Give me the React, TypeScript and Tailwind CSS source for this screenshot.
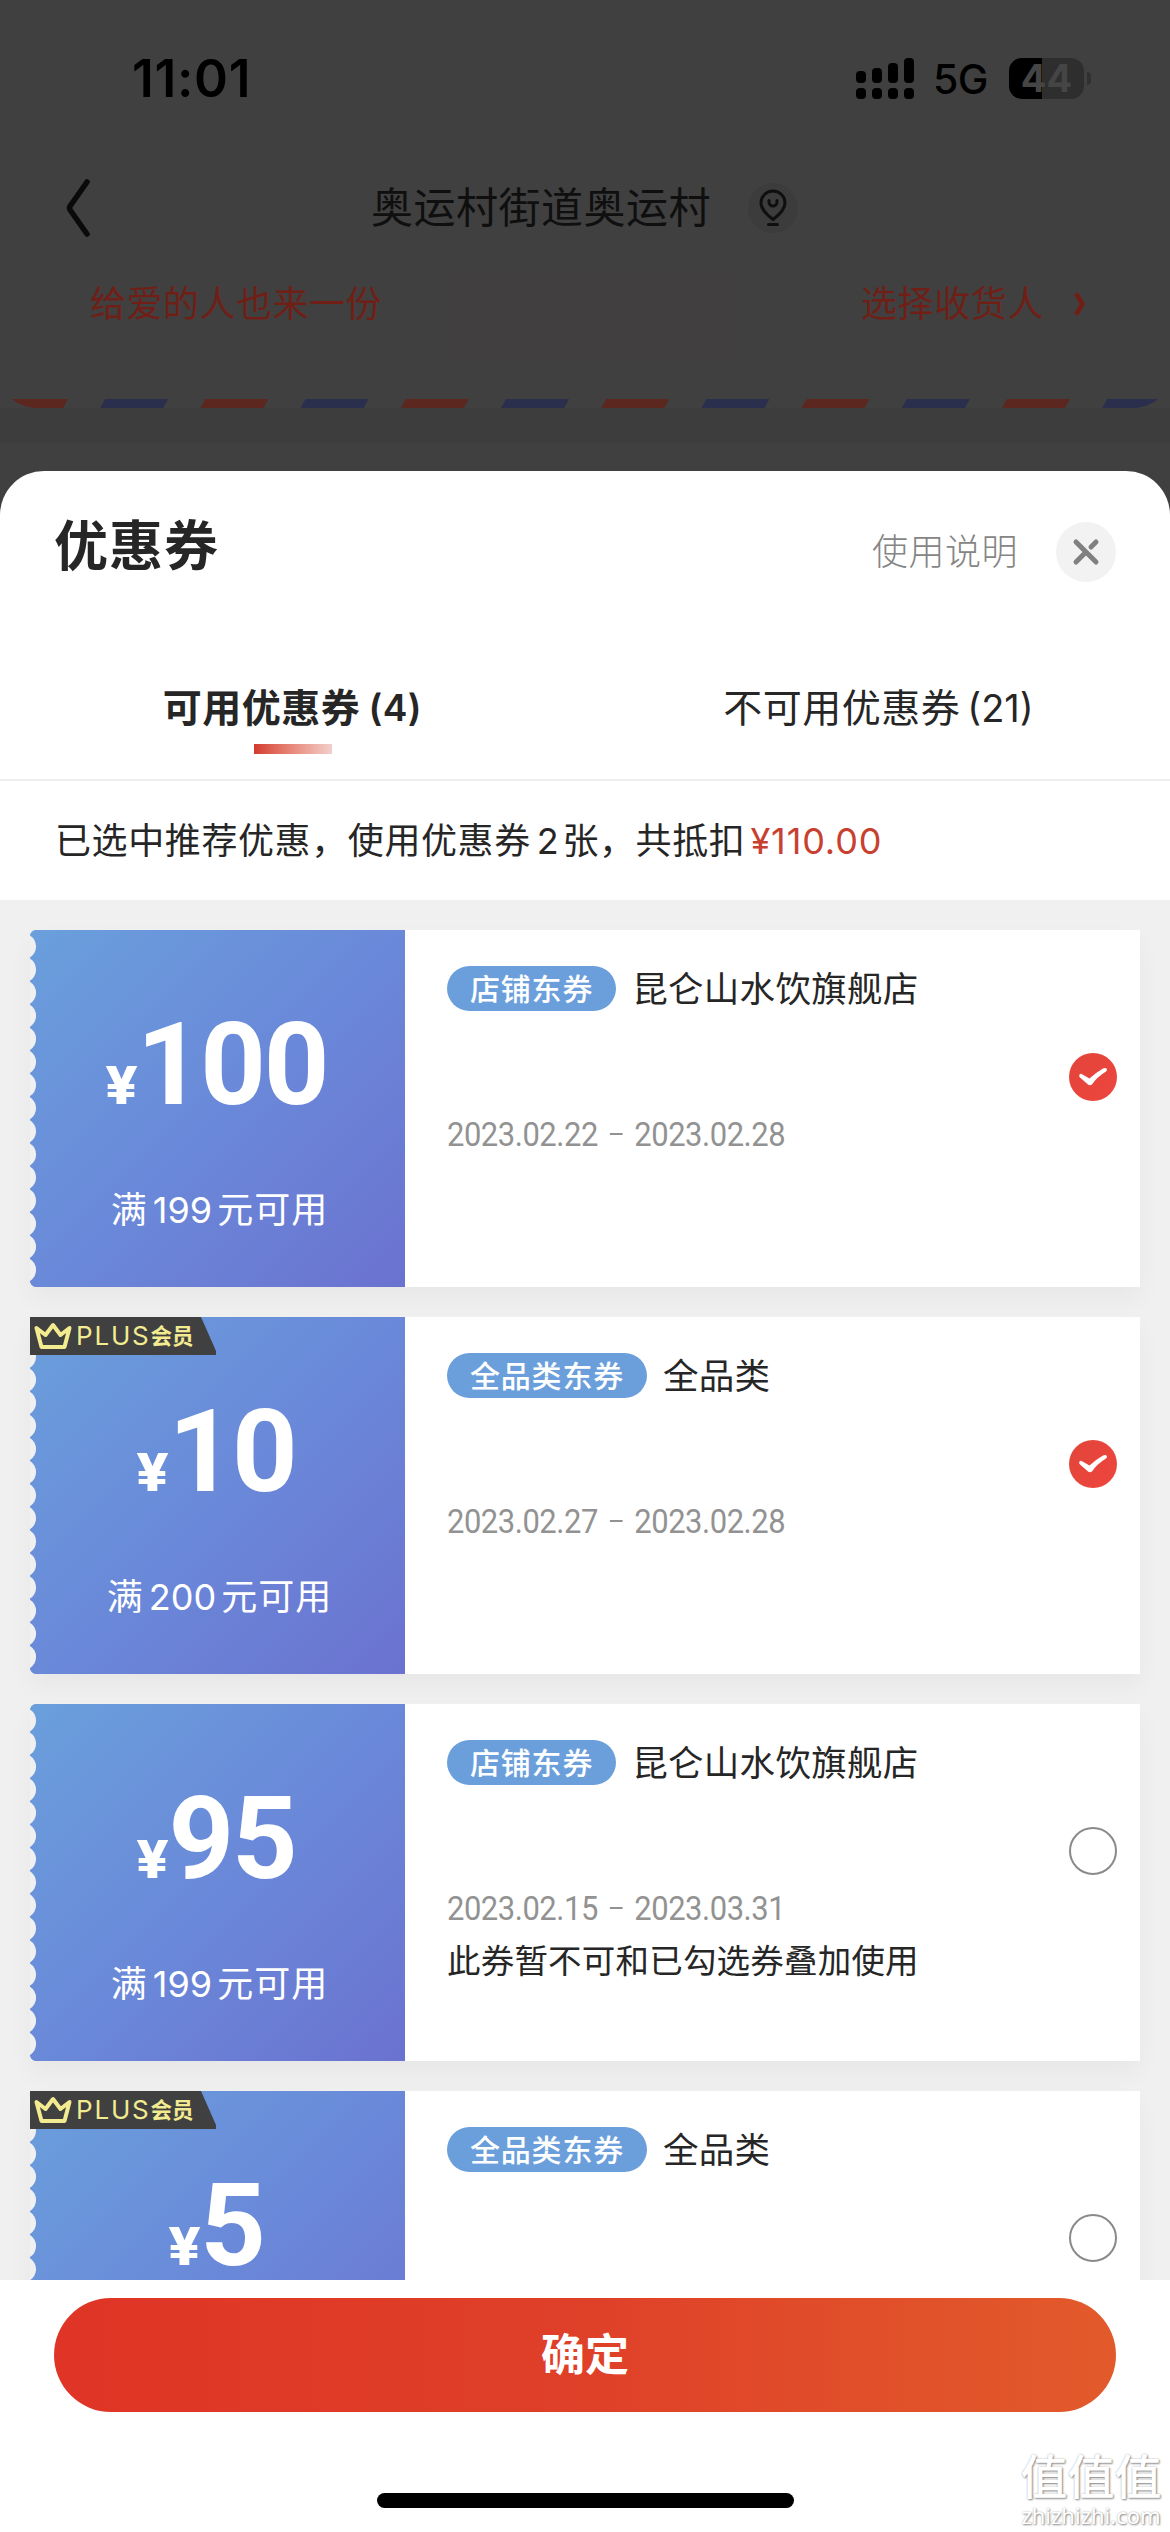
import { clsx } from "clsx";

type Coupon = {
  id: number;
  amount: string;
  threshold?: string;
  tag: string;
  scope: string;
  period?: [string, string];
  plus?: boolean;
  selected?: boolean;
  notice?: string;
};

const COUPONS: Coupon[] = [
  { id: 1, amount: "100", threshold: "199", tag: "店铺东券", scope: "昆仑山水饮旗舰店", period: ["2023.02.22", "2023.02.28"], selected: true },
  { id: 2, amount: "10", threshold: "200", tag: "全品类东券", scope: "全品类", period: ["2023.02.27", "2023.02.28"], plus: true, selected: true },
  { id: 3, amount: "95", threshold: "199", tag: "店铺东券", scope: "昆仑山水饮旗舰店", period: ["2023.02.15", "2023.03.31"], notice: "此券暂不可和已勾选券叠加使用" },
  { id: 4, amount: "5", tag: "全品类东券", scope: "全品类", plus: true },
];

const STRIPES = Array.from({ length: 12 }, (_, i) => i);
const NOTCHES = Array.from({ length: 15 }, (_, i) => i);

function StatusBar() {
  return (
    <div className="flex h-[155px] items-start justify-between pl-[132px] pr-[79px] pt-[57px] text-black">
      <span className="mt-[-4px] text-[51.5px] font-semibold leading-[50px] tracking-[0.7px]">11:01</span>
      <div className="flex items-center">
        <svg width="58" height="41" viewBox="0 0 58 41">
          {[13, 10, 5, 0].map((top, i) => (
            <g key={top}>
              <rect x={i * 16} y={top} width="10" height={25 - top} rx="4" />
              <rect x={i * 16} y="30" width="10" height="11" rx="4" />
            </g>
          ))}
        </svg>
        <span className="ml-[19px] mt-[2px] w-[55px] text-[41px] font-medium leading-[41px] tracking-[-0.5px]">5G</span>
        <div className="ml-[21px] flex h-[41px] w-[75px] items-center justify-center rounded-[13px] bg-[linear-gradient(90deg,#000_44%,#2e2e2e_44%)]">
          <span className="text-[38px] font-bold leading-[41px] text-[#454545]">44</span>
        </div>
        <div className="ml-[3px] h-[13px] w-[4px] rounded-r-full bg-[#303030]" />
      </div>
    </div>
  );
}

function PageHeader() {
  return (
    <header className="h-[471px] bg-[#404040]">
      <StatusBar />
      <div className="flex h-[105px] items-center pl-[64px]">
        <svg width="28" height="60" viewBox="0 0 28 60" fill="none" stroke="#0a0a0a" strokeWidth="5.5" strokeLinecap="round" strokeLinejoin="round">
          <path d="M23 4 6.5 27.5Q4.500 30 6.500 32.500L23 56" />
        </svg>
        <h1 className="ml-[279px] text-[42px] leading-[60px] tracking-[0.5px] text-[#0f0f0f]">奥运村街道奥运村</h1>
        <span className="ml-[37px] flex h-[50px] w-[50px] items-center justify-center rounded-full bg-[#3c3c3c]">
          <svg width="28" height="38" viewBox="0 0 28 38" fill="none" stroke="#0f0f0f" strokeWidth="3" strokeLinecap="round">
            <path d="M14 30.500C8 26 2 20.500 2 14a12 12 0 0 1 24 0c0 6.500-6 12-12 16.500Z" />
            <path d="M10 11.500v1.500a4 4 0 0 0 8 0v-1.500M9.500 35.500h9" />
          </svg>
        </span>
      </div>
      <div className="flex h-[139px] items-start justify-between bg-[linear-gradient(#413f3f,#413f3f)] bg-[length:286px_86px] bg-[position:448px_15px] bg-no-repeat pl-[90px] pr-[83px] pt-[22px] text-[#701f17]">
        <span className="text-[36px] leading-[44px] tracking-[0.5px]">给爱的人也来一份</span>
        <span className="flex items-center text-[36px] leading-[44px] tracking-[0.6px]">
          选择收货人
          <svg className="ml-[29px]" width="14" height="24" viewBox="0 0 14 24" fill="none" stroke="#701f17" strokeWidth="4.500">
            <path d="M3 1.500 9.500 12 3 22.500" />
          </svg>
        </span>
      </div>
      <svg className="block" width="1170" height="9" viewBox="0 0 1170 9">
        {STRIPES.map((i) => (
          <polygon key={i} points="5,0 68,0 63,9 0,9" transform={`translate(${i * 100.2})`} fill={i % 2 ? "#292f4d" : "#5b271f"} />
        ))}
        <path d="M0 0H12Q20 7 34 9H0Z M1170 0H1158Q1150 7 1136 9H1170Z" fill="#404040" />
      </svg>
      <div className="h-[35px] bg-[#3d3d3d]" />
    </header>
  );
}

function SheetHeader() {
  return (
    <div className="flex h-[161px] items-start justify-between pl-[54px] pr-[54px]">
      <h2 className="mt-[42px] text-[54px] font-semibold leading-[68px] tracking-[1px]">优惠券</h2>
      <div className="mt-[51px] flex items-center gap-[38px]">
        <span className="text-[36px] font-light leading-[60px] tracking-[0.5px] text-[#858585]">使用说明</span>
        <button aria-label="关闭" className="flex h-[60px] w-[60px] items-center justify-center rounded-full bg-[#f2f2f2]">
          <svg width="30" height="30" viewBox="0 0 30 30" stroke="#808080" strokeWidth="5" strokeLinecap="round">
            <path d="M5 5l20 20M5 25l10-10M20 10l5-5" />
          </svg>
        </button>
      </div>
    </div>
  );
}

function Tabs() {
  return (
    <div className="grid h-[149px] grid-cols-2 border-b-2 border-[#efefef] pt-[48px] text-center text-[39px] leading-[56px] tracking-[0.5px]">
      <div className="flex flex-col items-center font-semibold">
        <span className="flex">可用优惠券<span className="ml-[8px] text-[37px]">(4)</span></span>
        <span className="mt-[8px] h-[10px] w-[78px] bg-linear-to-r from-[#d2392c] to-[#f2cfcb]" />
      </div>
      <div className="flex justify-center pl-[2px]">
        不可用优惠券<span className="ml-[7px] text-[38px] tracking-[0]">(21)</span>
      </div>
    </div>
  );
}

function PlusBadge() {
  return (
    <div className="absolute left-0 top-0 flex h-[38px] w-[186px] items-center bg-[#404040] pl-[4px] text-[#f3eb90] [clip-path:polygon(0_0,171px_0,186px_34px,186px_100%,0_100%)]">
      <svg width="38" height="28" viewBox="0 0 38 28" fill="none" stroke="currentColor" strokeWidth="4" strokeLinejoin="round">
        <path d="M2.500 6 7.500 25H30.500L35.500 6 26.500 13 19 3 11.500 13Z" />
      </svg>
      <span className="ml-[4px] text-[26px] leading-[38px] tracking-[1.800px]">PLUS</span>
      <span className="text-[21.5px] font-semibold leading-[36px]">会员</span>
    </div>
  );
}

function PerforatedEdge() {
  return (
    <svg className="absolute left-0 top-0" width="8" height="357" viewBox="0 0 8 357" fill="#f0f0f0">
      <path d="M0 0H5Q1 1 0 5ZM0 357H5Q1 356 0 352Z" />
      {NOTCHES.map((i) => (
        <path key={i} d="M0 0A13 13 0 0 1 0 22Z" transform={`translate(0 ${5.5 + i * 23.1})`} />
      ))}
    </svg>
  );
}

function CheckMark({ selected }: { selected?: boolean }) {
  return (
    <span
      className={clsx(
        "flex h-[48px] w-[48px] shrink-0 items-center justify-center rounded-full",
        selected ? "bg-linear-to-br from-[#e2453a] to-[#ee453d]" : "border-2 border-[#8a8a8a]",
      )}
    >
      {selected && (
        <svg width="30" height="20" viewBox="0 0 30 20" fill="#fff">
          <path d="M1.500 7.500Q.5 9.500 2 10.500L10 17.500Q12 19 14 17.500Q19 10 28 4.500Q30 3 28.500 1.500Q27 .5 25 1.500Q18 5.500 11.500 11.500L4.500 7.500Q2.500 6 1.500 7.500Z" />
        </svg>
      )}
    </span>
  );
}

function CouponCard({ coupon }: { coupon: Coupon }) {
  return (
    <article className="relative flex h-[357px] shrink-0 bg-white shadow-[0_12px_24px_rgba(0,0,0,0.04)]">
      <div className="relative flex w-[375px] flex-col items-center bg-[linear-gradient(135deg,#6a9fdc_0%,#6a89d9_50%,#6b72d0_100%)] text-white">
        <PerforatedEdge />
        <div className="mt-[85px] flex h-[100px] items-baseline font-bold">
          <span className="origin-right scale-x-110 text-[52px] font-extrabold leading-[100px]">¥</span>
          <span className="ml-[-1px] font-['Roboto'] text-[114.5px] leading-[100px] tracking-[-2.2px]">{coupon.amount}</span>
        </div>
        {coupon.threshold && (
          <p className="mt-[69px] pl-[4px] text-[36px] leading-[52px] tracking-[1px]">
            满<span className="mx-[5px] tracking-[0]">{coupon.threshold}</span>元可用
          </p>
        )}
        {coupon.plus && <PlusBadge />}
      </div>
      <div className="flex flex-1 items-start justify-between pl-[42px] pr-[23px]">
        <div>
          <div className="mt-[36px] flex h-[45px] items-center gap-[16px]">
            <span className="flex h-[45px] items-center rounded-full bg-[#6b9fdb] px-[23px] pt-px text-[30px] font-medium leading-[44px] tracking-[0.8px] text-white">{coupon.tag}</span>
            <span className="pt-[2px] text-[35.5px] leading-[45px] tracking-[0.3px]">{coupon.scope}</span>
          </div>
          {coupon.period && (
            <p className="mt-[103px] flex h-[40px] origin-left scale-x-[0.91] items-center font-['Roboto'] text-[34px] leading-[40px] tracking-[-0.5px] text-[#929292]">
              {coupon.period[0]}
              <span className="mx-[13px] h-[2.5px] w-[14px] bg-[#929292]" />
              {coupon.period[1]}
            </p>
          )}
          {coupon.notice && <p className="mt-[13px] text-[33.5px] leading-[40px] tracking-[0.2px]">{coupon.notice}</p>}
        </div>
        <div className="mt-[123px]">
          <CheckMark selected={coupon.selected} />
        </div>
      </div>
    </article>
  );
}

export default function App() {
  return (
    <div className="relative h-[2532px] w-[1170px] overflow-hidden bg-[#404040] font-['Inter','Noto_Sans_CJK_SC',sans-serif] text-[#262626]">
      <PageHeader />
      <section className="flex h-[2061px] flex-col rounded-t-[44px] bg-white">
        <SheetHeader />
        <Tabs />
        <p className="flex h-[119px] items-center pl-[55px] text-[36px] leading-[52px] tracking-[0.6px]">
          已选中推荐优惠，使用优惠券<span className="ml-[6px] mr-[3px]">2</span>张，共抵扣
          <span className="ml-[5px] tracking-[0.9px] text-[#c8402f]">¥110.00</span>
        </p>
        <div className="flex h-[1380px] flex-col gap-[30px] overflow-hidden bg-[#f0f0f0] px-[30px] pt-[30px]">
          {COUPONS.map((coupon) => (
            <CouponCard key={coupon.id} coupon={coupon} />
          ))}
        </div>
        <div className="flex flex-1 flex-col items-center px-[54px] pt-[18px]">
          <button className="h-[114px] w-full rounded-full bg-linear-to-r from-[#df3426] via-[#df4028] to-[#e25a2b] text-[44px] font-semibold leading-[114px] text-white">
            确定
          </button>
          <div className="mt-[81px] h-[15px] w-[417px] rounded-full bg-black" />
        </div>
      </section>
      <div className="absolute bottom-[4px] right-[8px] flex w-[142px] flex-col items-center text-white [text-shadow:1px_1px_2px_#888,0_0_2px_#bbb]">
        <span className="text-[47px] font-medium leading-[50px]">值值值</span>
        <span className="font-['Noto_Sans'] text-[22px] leading-[26px]">zhizhizhi.com</span>
      </div>
    </div>
  );
}
